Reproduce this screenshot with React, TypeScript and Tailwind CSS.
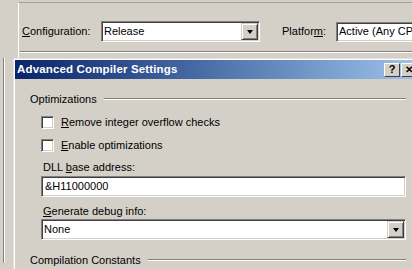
import React from 'react';

const font = { fontFamily: '"Liberation Sans", Arial, sans-serif' };

function DropButton({ className = '' }: { className?: string }) {
  return (
    <div
      className={`flex items-center justify-center bg-[#d4d0c8] border border-t-[#d4d0c8] border-l-[#d4d0c8] border-b-[#404040] border-r-[#404040] shadow-[inset_1px_1px_0_#ffffff,inset_-1px_-1px_0_#808080] ${className}`}
    >
      <div className="h-0 w-0 border-x-[3.5px] border-t-[4px] border-x-transparent border-t-black" />
    </div>
  );
}

function Sunken({ className = '', children }: { className?: string; children?: React.ReactNode }) {
  return (
    <div
      className={`bg-white border border-t-[#808080] border-l-[#808080] border-b-white border-r-white shadow-[inset_1px_1px_0_#404040,inset_-1px_-1px_0_#d4d0c8] ${className}`}
    >
      {children}
    </div>
  );
}

function Combo({ value, className = '' }: { value: string; className?: string }) {
  return (
    <Sunken className={`flex h-[21px] items-center justify-between pl-[2px] pr-[1px] ${className}`}>
      <span className="leading-[13px]">{value}</span>
      <DropButton className="h-[17px] w-[17px]" />
    </Sunken>
  );
}

function CheckRow({ ul, rest, className = '' }: { ul: string; rest: string; className?: string }) {
  return (
    <div className={`ml-[11px] flex h-[13px] items-center gap-[7px] ${className}`}>
      <Sunken className="h-[13px] w-[13px]" />
      <span className="leading-[13px]">
        <span className="underline">{ul}</span>
        {rest}
      </span>
    </div>
  );
}

function GroupHeading({ title, className = '' }: { title: string; className?: string }) {
  return (
    <div className={`flex items-center gap-[7px] ${className}`}>
      <span className="leading-[14px]">{title}</span>
      <div className="flex-1 border-t border-b border-t-[#808080] border-b-white" />
    </div>
  );
}

function CaptionButton({ children, className = '' }: { children: React.ReactNode; className?: string }) {
  return (
    <div
      className={`flex h-[14px] w-[16px] items-center justify-center bg-[#d4d0c8] border border-t-white border-l-white border-b-[#404040] border-r-[#404040] font-bold leading-none ${className}`}
    >
      {children}
    </div>
  );
}

export default function App() {
  return (
    <div className="relative h-[269px] w-[412px] overflow-hidden bg-[#d4d0c8] text-[11px] text-black" style={font}>
      {/* underlying property page */}
      <div className="flex">
        <div className="mt-[58px] ml-[3px] h-[205px] w-[2px] border-l border-r border-l-[#808080] border-r-white" />
        <div className="mt-[2px] ml-[13px] h-[60px] flex-1 border-t border-l border-t-[#a0a0a0] border-l-white">
          <div className="mt-[18px] flex items-center pl-[3px]">
            <span className="w-[79px]">
              <span className="underline">C</span>onfiguration:
            </span>
            <Combo value="Release" className="h-[20px] w-[159px]" />
            <span className="ml-[22px] w-[54px]">
              Platfor<span className="underline">m</span>:
            </span>
            <Sunken className="flex h-[20px] flex-1 items-center pl-[2px] whitespace-nowrap">Active (Any CPU)</Sunken>
          </div>
          <div className="mt-[9px] ml-[1px] border-t border-b border-t-[#808080] border-b-white" />
        </div>
      </div>

      {/* dialog on top */}
      <div className="absolute left-[13px] top-[58px] h-[230px] w-[420px] border-t border-l border-t-[#e4e2dc] border-l-[#e4e2dc] bg-[#d4d0c8]">
        <div className="h-full border-t border-l border-t-white border-l-white">
          <div className="flex h-[19px] items-center bg-gradient-to-r from-[#0a246a] to-[#a6caf0] pl-[2px]">
            <span className="w-[367px] text-[11.5px] font-bold leading-[13px] tracking-[0.15px] text-white">
              Advanced Compiler Settings
            </span>
            <div className="flex gap-[1px]">
              <CaptionButton className="text-[11px]">?</CaptionButton>
              <CaptionButton className="text-[10px]">✕</CaptionButton>
            </div>
          </div>

          <div className="w-[391px] pl-[15px]">
            <GroupHeading title="Optimizations" className="pt-[13px]" />
            <CheckRow ul="R" rest="emove integer overflow checks" className="mt-[10px]" />
            <CheckRow ul="E" rest="nable optimizations" className="mt-[10px]" />
            <div className="mt-[9px] ml-[13px] leading-[13px]">
              DLL <span className="underline">b</span>ase address:
            </div>
            <Sunken className="mt-[2px] ml-[11px] flex h-[21px] items-center pl-[3px]">&amp;H11000000</Sunken>
            <div className="mt-[8px] ml-[13px] leading-[13px]">
              <span className="underline">G</span>enerate debug info:
            </div>
            <Combo value="None" className="mt-[1px] ml-[11px]" />
            <GroupHeading title="Compilation Constants" className="mt-[13px]" />
          </div>
        </div>
      </div>
    </div>
  );
}
